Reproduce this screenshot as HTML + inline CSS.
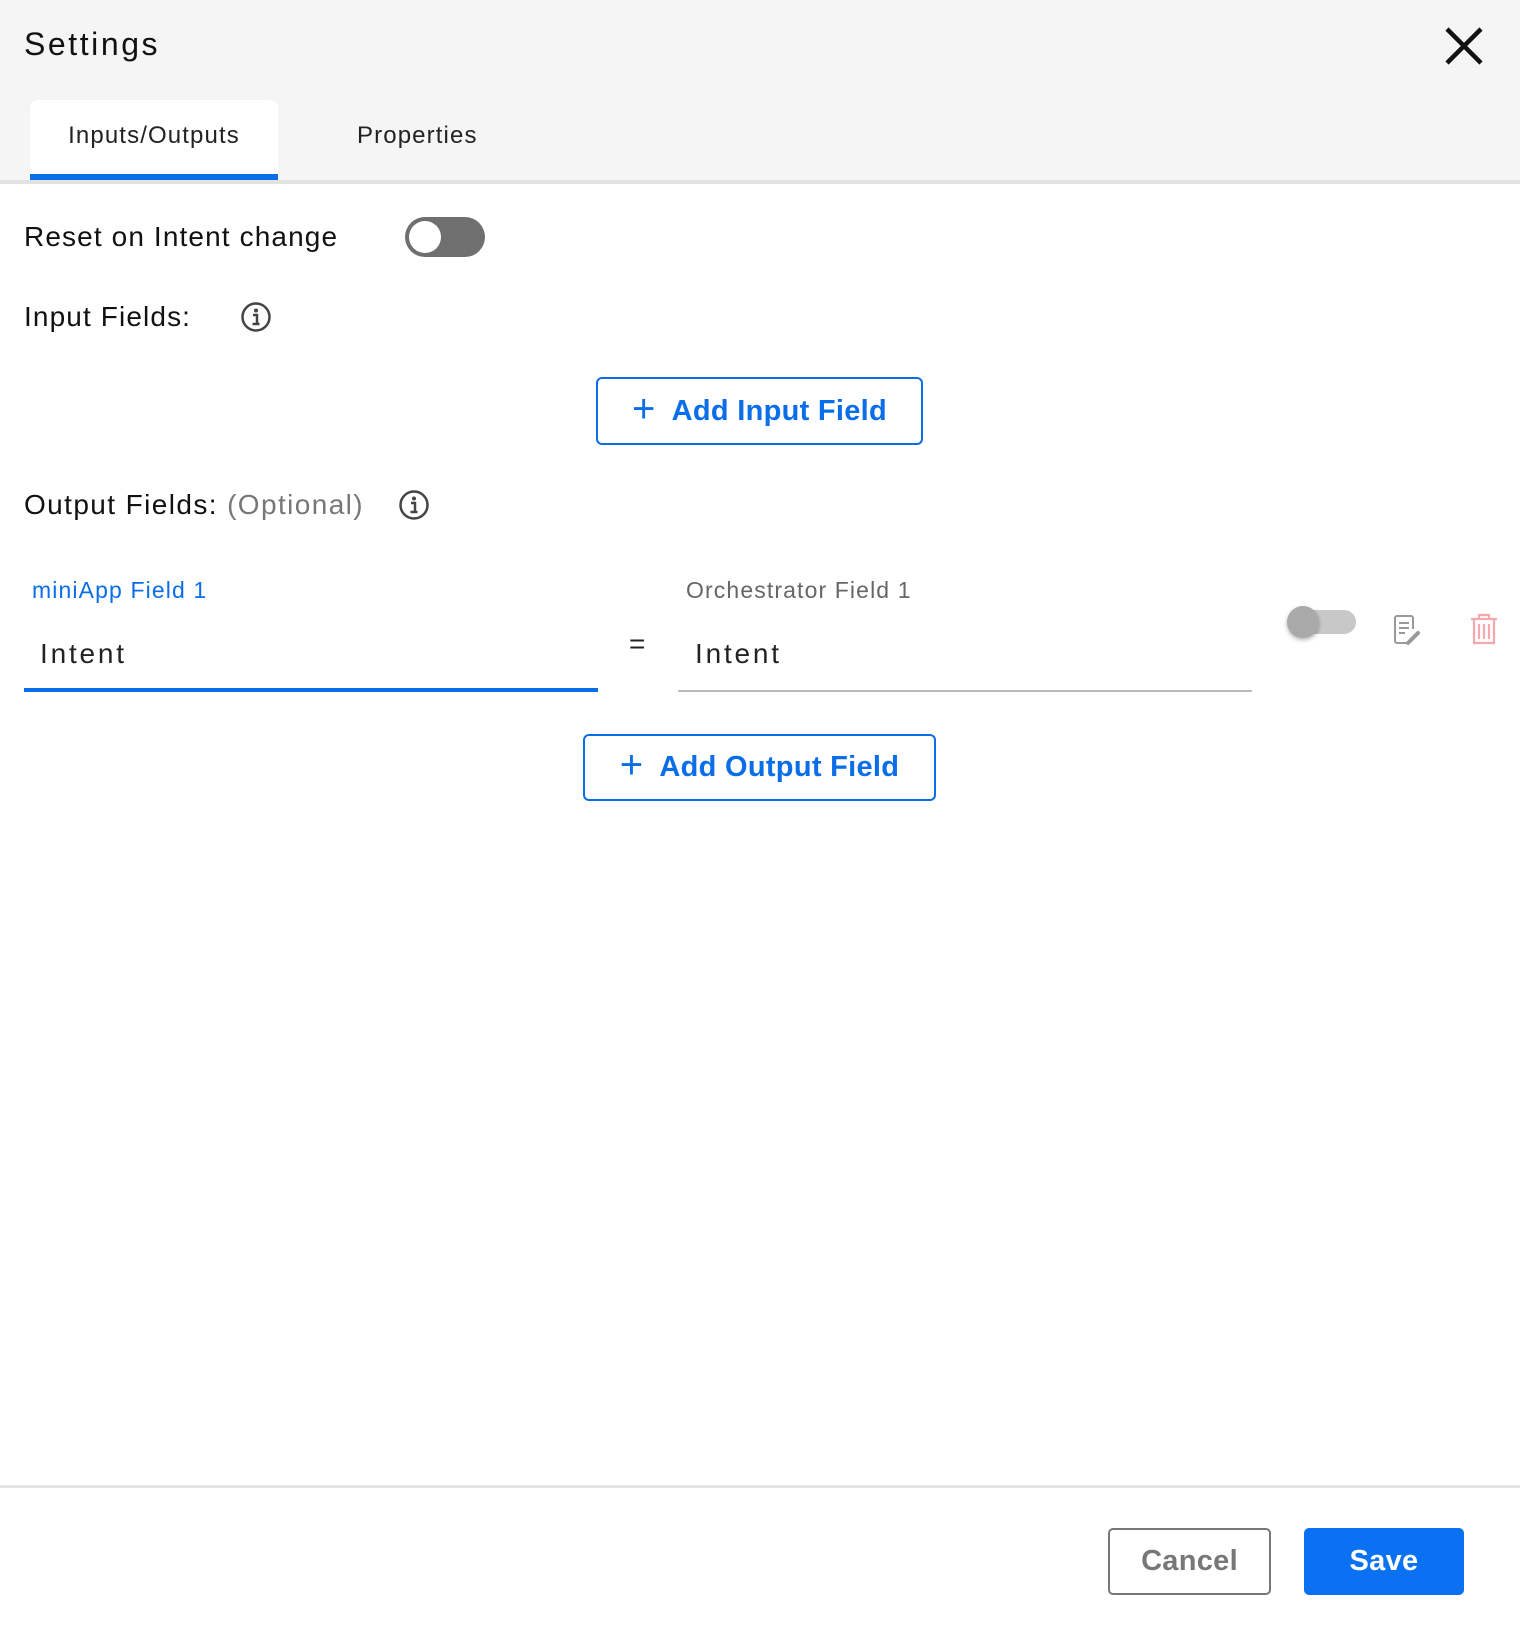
<!DOCTYPE html>
<html><head><meta charset="utf-8"><style>
*{margin:0;padding:0;box-sizing:border-box}
body{width:1520px;height:1630px;background:#fff;font-family:"Liberation Sans",sans-serif;color:#111;position:relative;overflow:hidden;letter-spacing:0.07em}
.a{position:absolute;white-space:nowrap}
.hdr{position:absolute;left:0;top:0;width:1520px;height:180px;background:#f5f5f5}
.btn{position:absolute;border:2px solid #0a6ee8;border-radius:6px;color:#0a6ee8;font-size:29px;font-weight:bold;display:flex;align-items:center;justify-content:center;gap:16px;background:#fff;letter-spacing:0.01em}
</style></head><body>
<div class="hdr"></div>
<div class="a" style="left:24px;top:26px;font-size:32px;letter-spacing:0.08em">Settings</div>
<svg class="a" style="left:1445px;top:27px" width="38" height="38" viewBox="0 0 38 38"><path d="M2 2L36 36M36 2L2 36" stroke="#111" stroke-width="4.5"/></svg>
<div class="a" style="left:30px;top:100px;width:248px;height:80px;background:#fff;border-radius:8px 8px 0 0"></div>
<div class="a" style="left:30px;top:174px;width:248px;height:6px;background:#0a6ee8"></div>
<div class="a" style="left:30px;top:122px;width:248px;text-align:center;font-size:24px;color:#222">Inputs/Outputs</div>
<div class="a" style="left:357px;top:122px;font-size:24px;color:#222">Properties</div>
<div class="a" style="left:0;top:180px;width:1520px;height:4px;background:#e2e2e2"></div>

<div class="a" style="left:24px;top:221px;font-size:28px">Reset on Intent change</div>
<div class="a" style="left:405px;top:217px;width:80px;height:40px;border-radius:20px;background:#6f6f6f"></div>
<div class="a" style="left:409px;top:221px;width:32px;height:32px;border-radius:50%;background:#fff"></div>

<div class="a" style="left:24px;top:301px;font-size:28px">Input Fields:</div>
<svg class="a" style="left:240px;top:301px" width="32" height="32" viewBox="0 0 32 32"><circle cx="16" cy="16" r="13.5" fill="none" stroke="#444" stroke-width="2.5"/><circle cx="16" cy="9.5" r="2" fill="#444"/><path d="M13 14h4v9M12.5 23h7" stroke="#444" stroke-width="2.5" fill="none"/></svg>

<div class="btn" style="left:596px;top:377px;width:327px;height:68px"><span style="font-size:40px;font-weight:normal;margin-top:-4px">+</span>Add Input Field</div>

<div class="a" style="left:24px;top:489px;font-size:28px;letter-spacing:0.05em">Output Fields:<span style="color:#777"> (Optional)</span></div>
<svg class="a" style="left:398px;top:489px" width="32" height="32" viewBox="0 0 32 32"><circle cx="16" cy="16" r="13.5" fill="none" stroke="#444" stroke-width="2.5"/><circle cx="16" cy="9.5" r="2" fill="#444"/><path d="M13 14h4v9M12.5 23h7" stroke="#444" stroke-width="2.5" fill="none"/></svg>

<div class="a" style="left:32px;top:577px;font-size:23px;color:#0a6ee8">miniApp Field 1</div>
<div class="a" style="left:686px;top:577px;font-size:23px;color:#666">Orchestrator Field 1</div>
<div class="a" style="left:40px;top:638px;font-size:28px;color:#222;letter-spacing:0.1em">Intent</div>
<div class="a" style="left:24px;top:688px;width:574px;height:4px;background:#0a6ee8"></div>
<div class="a" style="left:629px;top:628px;font-size:28px;color:#222">=</div>
<div class="a" style="left:695px;top:638px;font-size:28px;color:#222;letter-spacing:0.1em">Intent</div>
<div class="a" style="left:678px;top:690px;width:574px;height:2px;background:#bbb"></div>

<div class="a" style="left:1290px;top:610px;width:66px;height:24px;border-radius:12px;background:#c8c8c8"></div>
<div class="a" style="left:1287px;top:606px;width:32px;height:32px;border-radius:50%;background:#aaa;box-shadow:0 2px 4px rgba(0,0,0,.3)"></div>
<svg class="a" style="left:1392px;top:614px" width="30" height="32" viewBox="0 0 30 32"><path d="M17 29H5a2 2 0 0 1-2-2V4a2 2 0 0 1 2-2h14a2 2 0 0 1 2 2v11" fill="none" stroke="#999" stroke-width="2"/><path d="M7 9h10M7 14h10M7 19h6" stroke="#999" stroke-width="2"/><path d="M16 29l10-10" stroke="#999" stroke-width="4" stroke-linecap="round"/></svg>
<svg class="a" style="left:1468px;top:612px" width="32" height="34" viewBox="0 0 32 34"><path d="M3 7h26M11 7V3h10v4M6 7v24h20V7M11 12v15M16 12v15M21 12v15" fill="none" stroke="#f7a7ae" stroke-width="2.2"/></svg>

<div class="btn" style="left:583px;top:734px;width:353px;height:67px"><span style="font-size:40px;font-weight:normal;margin-top:-4px">+</span>Add Output Field</div>

<div class="a" style="left:0;top:1485px;width:1520px;height:3px;background:#e4e4e4"></div>
<div class="a" style="left:1108px;top:1528px;width:163px;height:67px;border:2px solid #777;border-radius:5px;font-size:29px;color:#777;display:flex;align-items:center;justify-content:center;font-weight:bold;letter-spacing:0.01em">Cancel</div>
<div class="a" style="left:1304px;top:1528px;width:160px;height:67px;background:#0a72f2;border-radius:5px;font-size:29px;color:#fff;display:flex;align-items:center;justify-content:center;font-weight:bold;letter-spacing:0.01em">Save</div>
</body></html>
